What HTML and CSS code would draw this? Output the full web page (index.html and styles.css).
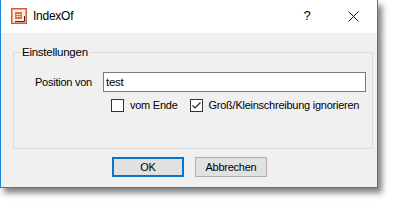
FILE: index.html
```html
<!DOCTYPE html>
<html lang="de">
<head>
<meta charset="utf-8">
<title>IndexOf</title>
<link rel="stylesheet" href="styles.css">
</head>
<body>
<div class="window">
  <div class="titlebar">
    <svg class="app-icon" width="16" height="16" viewBox="0 0 16 16">
      <rect x="0.5" y="0.5" width="15" height="15" fill="#fbeee6" stroke="#cf5f35"/>
      <rect x="1.5" y="1.5" width="13" height="13" fill="none" stroke="#e9a27f"/>
      <rect x="4" y="4" width="7" height="7" fill="#e2703f"/>
      <line x1="5" y1="6.5" x2="10" y2="6.5" stroke="#f7c7ae"/>
      <line x1="5" y1="8.5" x2="10" y2="8.5" stroke="#f7c7ae"/>
      <path d="M4 13.5 H13.5 V8" fill="none" stroke="#3a2a22" stroke-width="1"/>
    </svg>
    <span class="title">IndexOf</span>
    <span class="spacer"></span>
    <span class="cap-btn help">?</span>
    <span class="cap-btn close">
      <svg width="11" height="11" viewBox="0 0 11 11">
        <path d="M0.5 0.5 L10.5 10.5 M10.5 0.5 L0.5 10.5" stroke="#111" stroke-width="1" fill="none"/>
      </svg>
    </span>
  </div>
  <div class="client">
    <fieldset class="group">
      <legend class="legend">Einstellungen</legend>
      <div class="row">
        <span class="label">Position von</span>
        <div class="textbox">test</div>
      </div>
      <div class="checks">
        <span class="check"><span class="box"></span><span>vom Ende</span></span>
        <span class="check"><span class="box checked">
          <svg width="11" height="11" viewBox="0 0 11 11"><path d="M1.5 5.5 L4 8 L9.5 2.5" fill="none" stroke="#222" stroke-width="1.1"/></svg>
        </span><span>Groß/Kleinschreibung ignorieren</span></span>
      </div>
    </fieldset>
    <div class="buttons">
      <div class="btn default">OK</div>
      <div class="btn">Abbrechen</div>
    </div>
  </div>
</div>
</body>
</html>
```

FILE: styles.css
```css
html, body {
  margin: 0;
  padding: 0;
  background: #ffffff;
}
body {
  width: 393px;
  height: 203px;
  overflow: hidden;
  font-family: "Liberation Sans", Arial, sans-serif;
  font-size: 11px;
  letter-spacing: -0.25px;
  color: #000;
}
.window {
  width: 376px;
  height: 187px;
  border: 1px solid #1a86d9;
  border-top: none;
  display: flex;
  flex-direction: column;
  background: #f0f0f0;
  box-shadow: 4px 5px 6px rgba(0, 0, 0, 0.5);
}
.titlebar {
  height: 33px;
  flex: none;
  background: #ffffff;
  display: flex;
  align-items: center;
  padding-left: 10px;
}
.app-icon {
  display: block;
  margin-top: -1px;
}
.title {
  margin-left: 6px;
  font-size: 12px;
  margin-top: -1px;
}
.spacer { flex: 1; }
.cap-btn {
  width: 44px;
  height: 33px;
  display: flex;
  align-items: center;
  justify-content: center;
}
.help {
  font-size: 13px;
  margin-top: -2px;
  margin-right: 2px;
}
.close {
  margin-right: 2px;
}
.close svg { display: block; margin-top: -1px; }
.client {
  flex: 1;
  display: flex;
  flex-direction: column;
}
.group {
  margin: 11px 4px 0 12px;
  border: 1px solid #dcdcdc;
  padding: 0 0 36px 0;
  min-inline-size: 0;
  display: flex;
  flex-direction: column;
}
.legend {
  margin-left: 6px;
  padding: 0 2px;
  line-height: 16px;
  font-size: 11.5px;
}
.row {
  display: flex;
  align-items: center;
  margin-top: 12px;
  padding-left: 21px;
  padding-right: 6px;
}
.label {
  width: 68px;
  flex: none;
  white-space: nowrap;
}
.textbox {
  flex: 1;
  height: 18px;
  border: 1px solid #7a7a7a;
  background: #fff;
  line-height: 18px;
  padding-left: 2px;
  font-size: 11.5px;
}
.checks {
  display: flex;
  margin-top: 7px;
  padding-left: 97px;
  gap: 12px;
  line-height: 13px;
  white-space: nowrap;
}
.check {
  display: flex;
  flex: none;
  align-items: center;
  gap: 6px;
}
.box {
  width: 11px;
  height: 11px;
  border: 1px solid #333;
  background: #fff;
  display: flex;
  align-items: center;
  justify-content: center;
}
.box svg { display: block; }
.buttons {
  display: flex;
  gap: 11px;
  margin-top: 8px;
  padding-left: 111px;
}
.btn {
  width: 70px;
  height: 18px;
  border: 1px solid #adadad;
  background: #e1e1e1;
  text-align: center;
  line-height: 18px;
}
.btn.default {
  border: 2px solid #0078d7;
  width: 68px;
  height: 16px;
  line-height: 16px;
}
```
